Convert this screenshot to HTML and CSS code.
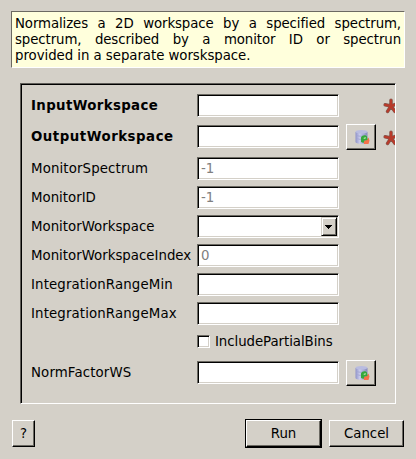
FILE: index.html
```html
<!DOCTYPE html>
<html lang="en">
<head>
<meta charset="utf-8">
<title>Algorithm dialog</title>
<link rel="stylesheet" href="styles.css">
</head>
<body>
<svg class="defs" width="0" height="0">
  <defs>
    <linearGradient id="can" x1="0" x2="1">
      <stop offset="0" stop-color="#8f92c8"/><stop offset=".35" stop-color="#c9cbec"/><stop offset="1" stop-color="#8488bd"/>
    </linearGradient>
    <symbol id="db" viewBox="0 0 16 16">
      <path d="M1.500 3v10c0 1 2.500 1.800 6 1.800s6-.8 6-1.800V3z" fill="url(#can)"/>
      <ellipse cx="7.500" cy="2.800" rx="6" ry="1.800" fill="#b9bce0"/>
      <path d="M3 6.500c2 1 6 1 8 .3M3 9.500c2 1 4 1 5 .5" stroke="#a4a8d4" fill="none"/>
      <path d="M9.500 12l3-1 2-2.500 1 3-1 3.500H10z" fill="#f5714a"/>
      <path d="M7 13V8.500c1-2.500 4.500-3 6-1l.5 3.500-3 .5-1 2.500z" fill="#35a83c"/>
      <path d="M9.500 9l2-1 .5 1.200-2 .8z" fill="#b5e6a8"/>
    </symbol>
    <symbol id="star" viewBox="0 0 16 16">
      <g stroke-linecap="round" fill="none">
        <path d="M8 8V2.300M8 8L2.200 6.800M8 8L4.600 13.400M8 8l4 5.500M8 8l6-2" stroke="#85584e" stroke-width="3.500"/>
        <path d="M8 8V2.300M8 8L2.200 6.800M8 8L4.600 13.400M8 8l4 5.500M8 8l6-2" stroke="#b93a2a" stroke-width="2.200"/>
      </g>
    </symbol>
  </defs>
</svg>
<main class="dialog">
  <div class="summary">
    <div class="line">Normalizes a 2D workspace by a specified spectrum,</div>
    <div class="line">spectrum, described by a monitor ID or spectrun</div>
    <div class="line last">provided in a separate worskspace.</div>
  </div>
  <form class="panel">
    <label class="required">InputWorkspace</label><div class="field"></div><i></i><svg class="star"><use href="#star"/></svg>
    <label class="required wide low">OutputWorkspace</label><div class="field low"></div><div class="button tool"><svg><use href="#db"/></svg></div><svg class="star lower"><use href="#star"/></svg>
    <label class="loose">MonitorSpectrum</label><div class="field">-1</div><i></i><i></i>
    <label>MonitorID</label><div class="field">-1</div><i></i><i></i>
    <label>MonitorWorkspace</label><div class="field combo"><div class="button drop"><svg viewBox="0 0 7 4"><path d="M0 0h7v1H6v1H5v1H4v1H3V3H2V2H1V1H0z"/></svg></div></div><i></i><i></i>
    <label>MonitorWorkspaceIndex</label><div class="field">0</div><i></i><i></i>
    <label class="loose">IntegrationRangeMin</label><div class="field"></div><i></i><i></i>
    <label class="loose">IntegrationRangeMax</label><div class="field"></div><i></i><i></i>
    <i></i><div class="check"><span class="box"></span><span>IncludePartialBins</span></div><i></i><i></i>
    <label class="loose low">NormFactorWS</label><div class="field low"></div><div class="button tool"><svg><use href="#db"/></svg></div><i></i>
  </form>
  <div class="actions">
    <div class="button help">?</div>
    <div class="default"><div class="button run">Run</div></div>
    <div class="button cancel">Cancel</div>
  </div>
</main>
</body>
</html>
```
FILE: styles.css
```css
* { box-sizing: border-box; }
body { margin: 0; background: #d4d0c8; color: #000; font: 13.33px/16px "DejaVu Sans", sans-serif; }
.defs { position: absolute; }
.dialog { width: 416px; height: 459px; padding: 11px 12px 11px 11px; overflow: hidden; }
.summary { width: 394px; height: 57px; padding: 4px 3px 0; background: #ffffdc; border: 1px solid; border-color: #6b6962 #fff #fff #6b6962; white-space: nowrap; }
.line { text-align-last: justify; letter-spacing: -.1px; }
.line.last { text-align-last: left; letter-spacing: -.05px; }
.panel {
  margin: 15px 0 0 9px; width: 376px; height: 321px; padding: 10px 0 0 10px; overflow: hidden;
  border: 1px solid; border-color: #5f5d58 #fff #fff #5f5d58;
  box-shadow: inset 1px 1px #000;
  display: grid; grid-template-columns: 166px 149px 37px 12px; grid-template-rows: 30px 33px repeat(7, 29px) 26px; align-items: start;
}
label { line-height: 23px; white-space: nowrap; }
.loose { letter-spacing: .13px; }
.required { font-weight: bold; letter-spacing: .36px; }
.required.wide { letter-spacing: .52px; }
.field {
  width: 142px; height: 23px; padding: 1px 3px 0; line-height: 20px; color: #808080; background: #fff;
  border: 1px solid; border-color: #6b6962 #fff #fff #6b6962;
  box-shadow: inset 1px 1px #000, inset -1px -1px #d4d0c8;
}
.low { margin-top: 1px; }
.button {
  display: flex; align-items: center; justify-content: center; background: #d4d0c8;
  border: 1px solid; border-color: #fff #000 #000 #fff; box-shadow: inset -1px -1px #6b6962;
}
.tool { width: 30px; height: 26px; }
.tool svg { width: 16px; height: 16px; margin-left: 2px; }
.combo { display: flex; justify-content: flex-end; padding: 1px 1px 1px 0; }
.drop { width: 16px; height: 19px; margin-right: 0; padding-right: 1px; border-color: #d4d0c8 #000 #000 #d4d0c8; box-shadow: inset 1px 1px #fff, inset -1px -1px #6b6962; }
.drop svg { width: 7px; height: 4px; }
.star { width: 16px; height: 16px; margin-top: 4px; }
.star.lower { margin-top: 6px; }
.check { display: flex; align-items: center; gap: 5px; height: 21px; white-space: nowrap; letter-spacing: -.06px; }
.box { width: 13px; height: 13px; background: #fff; border: 1px solid; border-color: #6b6962 #fff #fff #6b6962; box-shadow: inset 1px 1px #000, inset -1px -1px #d4d0c8; }
.actions { display: flex; align-items: center; margin: 15px 0 0 1px; height: 29px; }
.help { width: 23px; height: 27px; margin-right: auto; }
.default { border: 1px solid #000; margin-right: 7px; }
.run { width: 75px; height: 27px; }
.cancel { width: 75px; height: 27px; }
```
